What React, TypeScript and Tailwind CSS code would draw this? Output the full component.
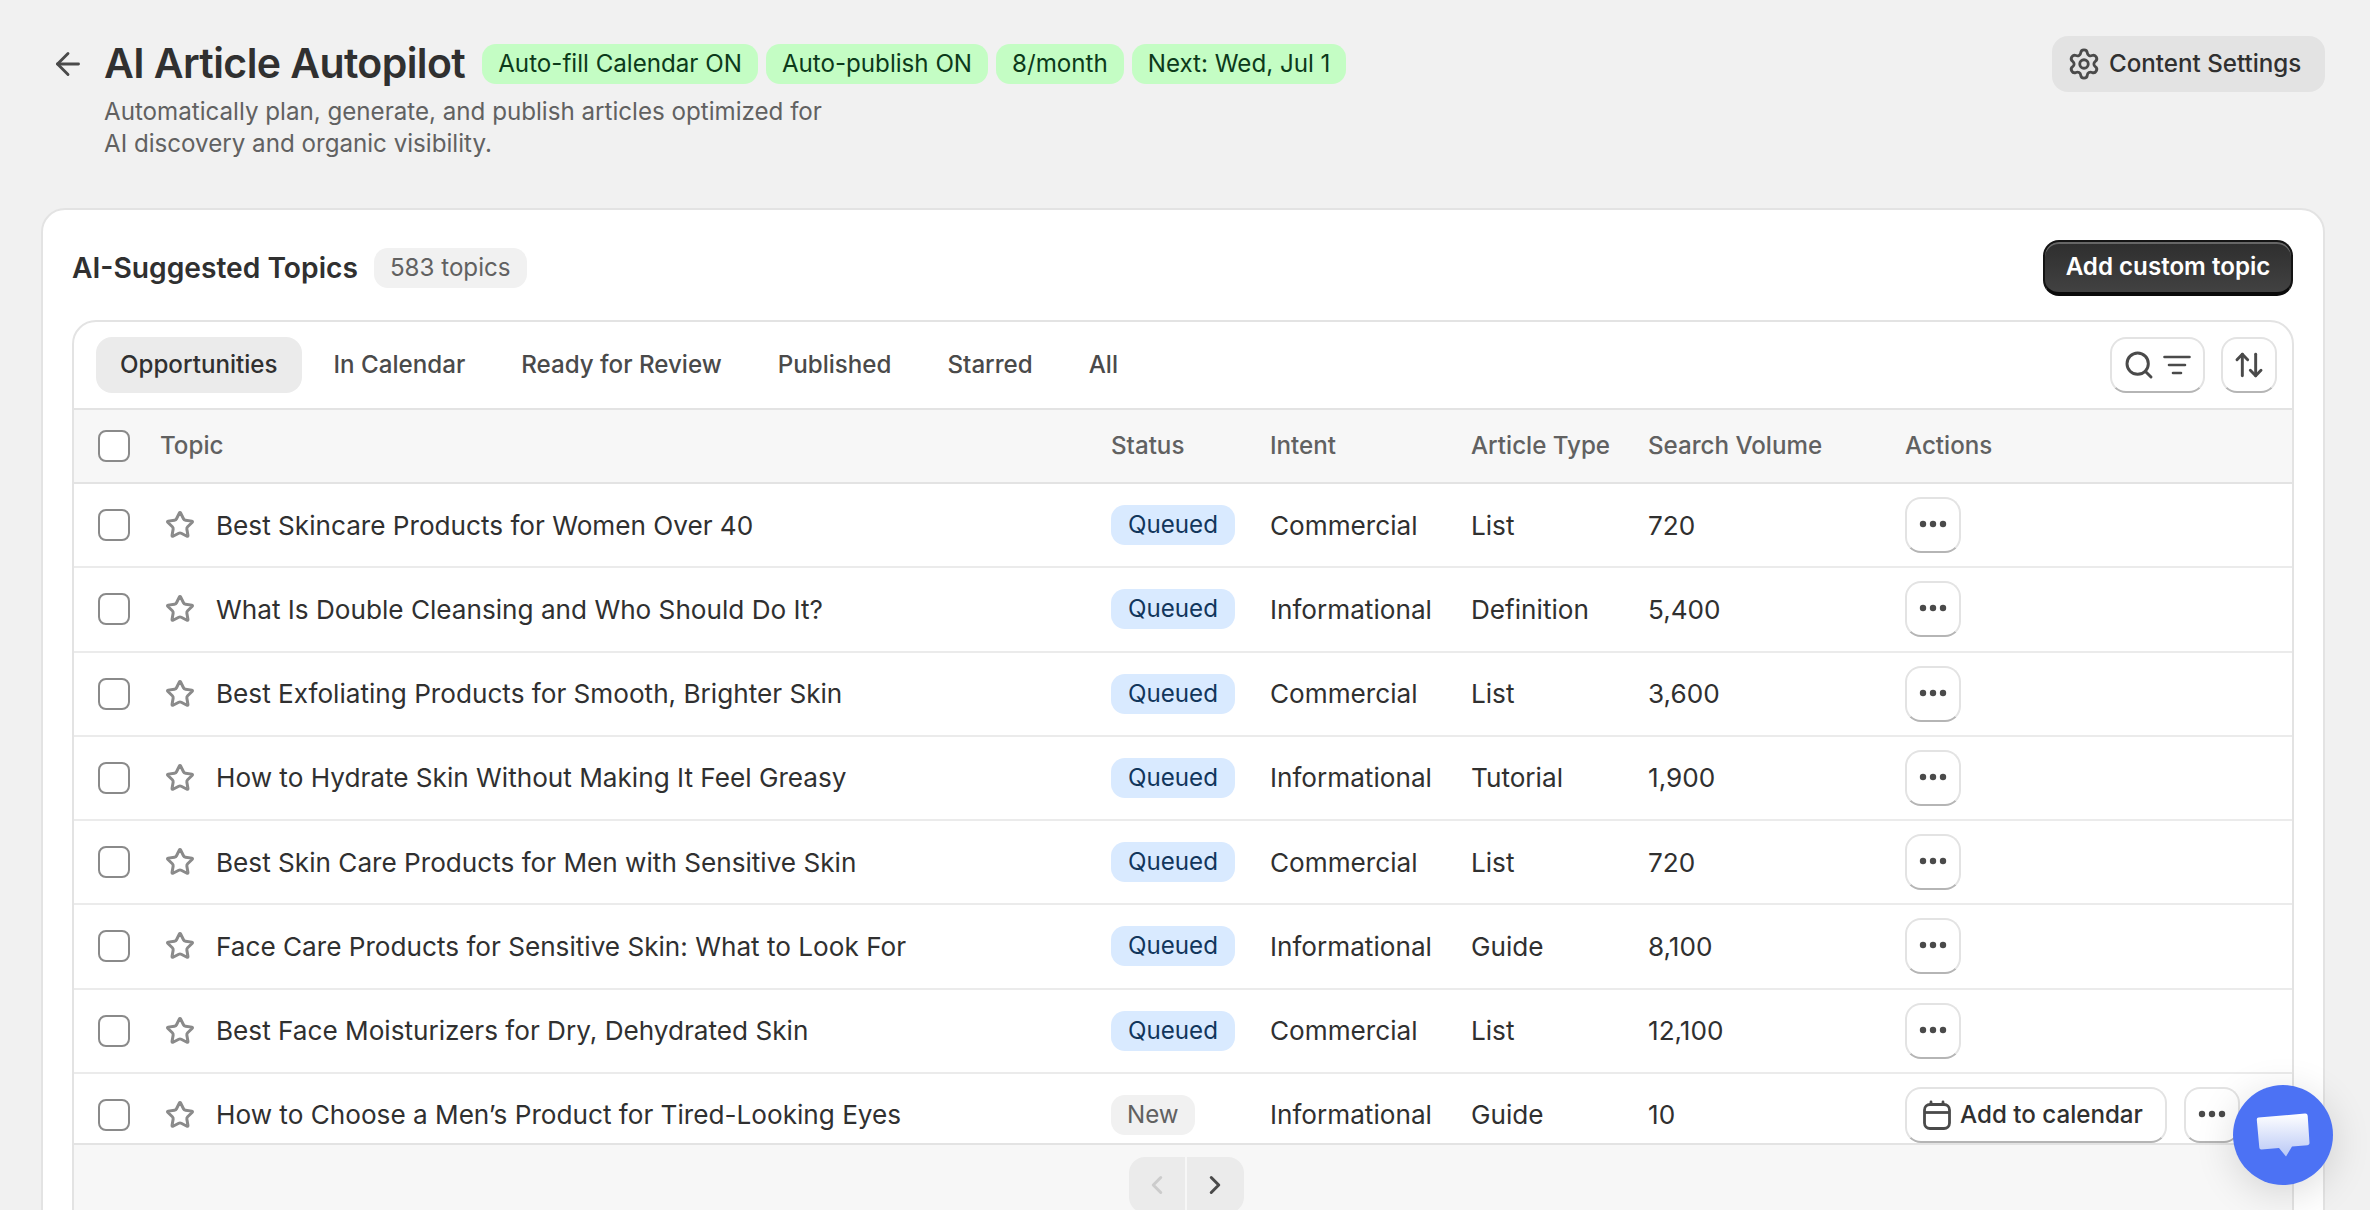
import React from "react";
import { ArrowLeft, ArrowUpDown, ChevronLeft, ChevronRight, Search, Settings, Star } from "lucide-react";

const rows = [
  { title: "Best Skincare Products for Women Over 40", intent: "Commercial", type: "List", volume: "720" },
  { title: "What Is Double Cleansing and Who Should Do It?", intent: "Informational", type: "Definition", volume: "5,400" },
  { title: "Best Exfoliating Products for Smooth, Brighter Skin", intent: "Commercial", type: "List", volume: "3,600" },
  { title: "How to Hydrate Skin Without Making It Feel Greasy", intent: "Informational", type: "Tutorial", volume: "1,900" },
  { title: "Best Skin Care Products for Men with Sensitive Skin", intent: "Commercial", type: "List", volume: "720" },
  { title: "Face Care Products for Sensitive Skin: What to Look For", intent: "Informational", type: "Guide", volume: "8,100" },
  { title: "Best Face Moisturizers for Dry, Dehydrated Skin", intent: "Commercial", type: "List", volume: "12,100" },
  { title: "How to Choose a Men’s Product for Tired-Looking Eyes", intent: "Informational", type: "Guide", volume: "10", isNew: true },
];

const tabs = ["In Calendar", "Ready for Review", "Published", "Starred", "All"];
const chips = ["Auto-fill Calendar ON", "Auto-publish ON", "8/month", "Next: Wed, Jul 1"];
const gridCols = "grid grid-cols-[86px_951px_159px_201px_177px_257px_1fr] items-center";
const whiteBtn = "flex items-center justify-center bg-white border-2 border-[#e3e3e3] border-b-[#b5b5b5] rounded-[16px] h-[56px]";

function Checkbox() {
  return <div className="ml-[24px] w-[32px] h-[32px] bg-white rounded-[8px] border-2 border-[#8a8a8a]" />;
}

function Dots() {
  return (
    <svg width="28" height="8" viewBox="0 0 28 8" fill="#4a4a4a" className="-mt-[2px]">
      <circle cx="4" cy="4" r="3.2" />
      <circle cx="14" cy="4" r="3.2" />
      <circle cx="24" cy="4" r="3.2" />
    </svg>
  );
}

function CalendarIcon() {
  return (
    <svg width="28" height="30" viewBox="0 0 28 30" fill="none" stroke="#4a4a4a" strokeWidth="2.8">
      <rect x="1.5" y="4.5" width="25" height="24" rx="5.5" />
      <path d="M1.5 12.5h25" />
      <path d="M8 4.5V2M20 4.5V2" strokeLinecap="round" />
    </svg>
  );
}

function ChatWidget() {
  return (
    <div className="absolute left-[2233px] top-[1085px] w-[100px] h-[100px] rounded-full bg-[#4c72f4] flex items-center justify-center shadow-[0_8px_40px_rgba(0,0,0,0.14)]">
      <svg width="56" height="46" viewBox="0 0 56 46">
        <defs>
          <linearGradient id="bubble" x1="0" y1="0" x2="0" y2="1">
            <stop offset="0" stopColor="#ffffff" />
            <stop offset="1" stopColor="#b9c8f6" />
          </linearGradient>
        </defs>
        <path
          d="M3.5 5.5 L50 1.5 Q52.5 1.3 52.7 3.8 L54.5 31 Q54.7 33 52.5 33.2 L37 34.6 L31 44.5 L24 36 L6.5 37.5 Q4.5 37.7 4.3 35.5 L1.8 7.8 Q1.6 5.7 3.5 5.5 Z"
          fill="url(#bubble)"
        />
      </svg>
    </div>
  );
}

export default function App() {
  return (
    <div className="relative h-[1210px] w-full overflow-hidden bg-[#f1f1f1] pl-[41px] pr-[45px] font-['Inter',sans-serif] text-[#303030] text-[24.15px]">
      {/* Page header */}
      <div className="h-[208px] pt-[36px] flex justify-between items-start">
        <div className="flex items-start pl-[9px]">
          <ArrowLeft size={36} strokeWidth={1.9} color="#4a4a4a" className="mt-[10px] mr-[18px]" />
          <div>
            <div className="flex items-center h-[56px] gap-[8px]">
              <h1 className="text-[41px] font-semibold tracking-[-0.6px] mr-[9px]">AI Article Autopilot</h1>
              {chips.map((c) => (
                <span key={c} className="h-[40px] px-[16px] flex items-center rounded-[14px] bg-[#c4fdc4] text-[#0c3a1a] whitespace-nowrap">
                  {c}
                </span>
              ))}
            </div>
            <p className="mt-[4px] leading-[32px] text-[#616161] w-[800px]">
              Automatically plan, generate, and publish articles optimized for
              <br />
              AI discovery and organic visibility.
            </p>
          </div>
        </div>
        <button className="h-[56px] w-[273px] flex items-center gap-[8px] pl-[15px] rounded-[16px] bg-[#e3e3e3] font-medium">
          <Settings size={34} strokeWidth={2} color="#4a4a4a" />
          Content Settings
        </button>
      </div>

      {/* Main card */}
      <div className="bg-white rounded-t-[24px] border-2 border-[#e3e3e3] px-[29px] h-[1100px]">
        <div className="flex items-center justify-between h-[110px] pt-[6px]">
          <div className="flex items-center gap-[16px]">
            <h2 className="text-[28.2px] font-semibold">AI-Suggested Topics</h2>
            <span className="h-[40px] px-[16px] flex items-center rounded-[14px] bg-[#f1f1f1] text-[#616161]">583 topics</span>
          </div>
          <button className="h-[56px] w-[250px] -translate-x-[1px] rounded-[16px] bg-gradient-to-b from-[#2e2e2e] to-[#424242] border-2 border-[#141414] border-b-[4px] border-b-[#0a0a0a] shadow-[inset_0_2px_0_#666666] text-white font-semibold">
            Add custom topic
          </button>
        </div>

        {/* Table */}
        <div className="rounded-t-[24px] border-2 border-[#e3e3e3] h-[1000px]">
          <div className="h-[88px] border-b-2 border-[#e3e3e3] flex items-center justify-between pl-[22px] pr-[15px]">
            <div className="flex items-center font-medium text-[#4a4a4a]">
              <span className="h-[56px] px-[24px] flex items-center rounded-[16px] bg-[#ebebeb] text-[#303030] font-[550]">Opportunities</span>
              <div className="flex items-center ml-[4px]">
                {tabs.map((t) => (
                  <span key={t} className="px-[28px]">{t}</span>
                ))}
              </div>
            </div>
            <div className="flex items-center gap-[16px]">
              <button className={`${whiteBtn} w-[95px] gap-[8px] pr-[2px]`}>
                <Search size={32} strokeWidth={2.2} color="#4a4a4a" />
                <svg width="28" height="22" viewBox="0 0 28 22" stroke="#4a4a4a" strokeWidth="2.6" strokeLinecap="round">
                  <path d="M1.5 3h25M6 11h16M10 19h8" />
                </svg>
              </button>
              <button className={`${whiteBtn} w-[56px]`}>
                <ArrowUpDown size={32} strokeWidth={2.2} color="#4a4a4a" />
              </button>
            </div>
          </div>

          <div className={`${gridCols} h-[74px] bg-[#f7f7f7] border-b-2 border-[#e3e3e3] text-[#616161] font-medium`}>
            <Checkbox />
            <span>Topic</span>
            <span>Status</span>
            <span>Intent</span>
            <span>Article Type</span>
            <span>Search Volume</span>
            <span>Actions</span>
          </div>

          <div className="h-[659px] overflow-hidden">
            {rows.map((r) => (
              <div key={r.title} className={`${gridCols} h-[84.25px] border-b-2 border-[#ebebeb] text-[26.15px]`}>
                <Checkbox />
                <div className="flex items-center">
                  <Star size={30} strokeWidth={2.4} color="#8a8a8a" className="ml-[5px] mr-[21px]" />
                  <span>{r.title}</span>
                </div>
                <div className="text-[24.15px]">
                  {r.isNew ? (
                    <span className="inline-flex h-[40px] px-[16px] items-center rounded-[14px] bg-[#f1f1f1] text-[#616161]">New</span>
                  ) : (
                    <span className="inline-flex h-[40px] px-[17px] items-center rounded-[14px] bg-[#d9eaff] text-[#12365c]">Queued</span>
                  )}
                </div>
                <span>{r.intent}</span>
                <span>{r.type}</span>
                <span>{r.volume}</span>
                <div className="flex items-center gap-[17px] text-[24.15px]">
                  {r.isNew && (
                    <button className={`${whiteBtn} w-[262px] gap-[9px] pr-[6px] font-medium`}>
                      <CalendarIcon />
                      Add to calendar
                    </button>
                  )}
                  <button className={`${whiteBtn} w-[56px]`}>
                    <Dots />
                  </button>
                </div>
              </div>
            ))}
          </div>

          {/* Pagination */}
          <div className="h-[200px] bg-[#f7f7f7] border-t-2 border-[#e3e3e3] flex justify-center pt-[12px] pl-[6px]">
            <div className="flex gap-[2px] h-[56px]">
              <span className="w-[56px] flex items-center justify-center rounded-l-[16px] bg-[#ebebeb]">
                <ChevronLeft size={30} strokeWidth={2.4} color="#cccccc" />
              </span>
              <span className="w-[57px] flex items-center justify-center rounded-r-[16px] bg-[#ebebeb]">
                <ChevronRight size={30} strokeWidth={2.4} color="#4a4a4a" />
              </span>
            </div>
          </div>
        </div>
      </div>

      <ChatWidget />
    </div>
  );
}
